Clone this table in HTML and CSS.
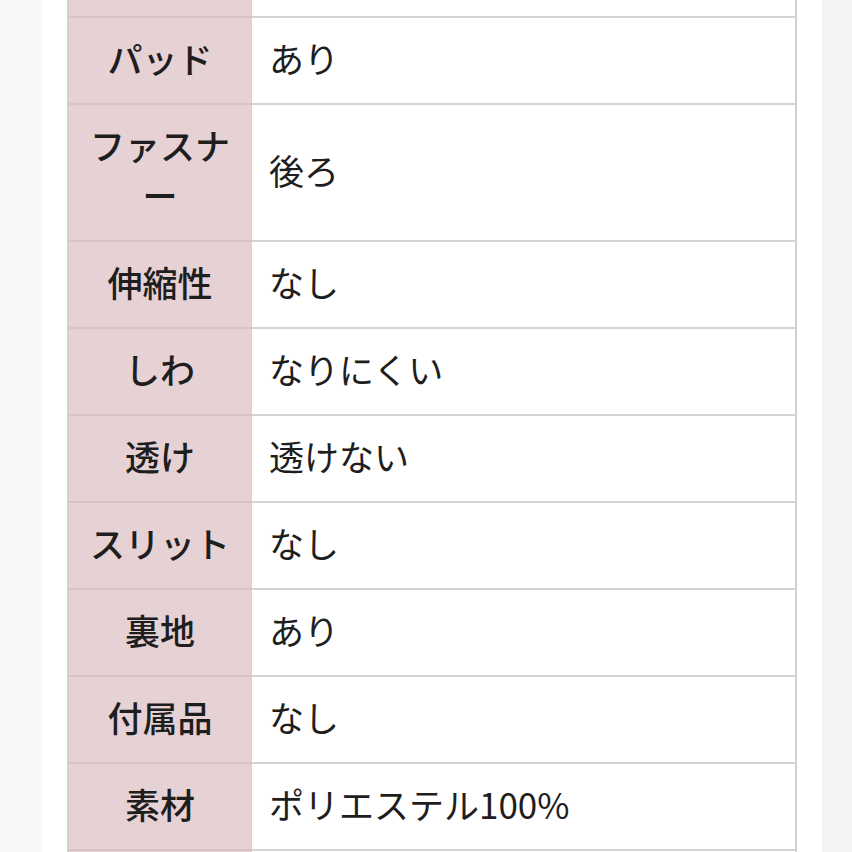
FILE: index.html
```html
<!DOCTYPE html>
<html lang="ja">
<head>
<meta charset="utf-8">
<link rel="stylesheet" href="styles.css">
</head>
<body>
<div class="page">
  <div class="card">
    <div class="spec">
      <div class="label top"></div><div class="value top"></div>
      <div class="label">パッド</div><div class="value">あり</div>
      <div class="label">ファスナー</div><div class="value">後ろ</div>
      <div class="label">伸縮性</div><div class="value">なし</div>
      <div class="label">しわ</div><div class="value">なりにくい</div>
      <div class="label">透け</div><div class="value">透けない</div>
      <div class="label">スリット</div><div class="value">なし</div>
      <div class="label">裏地</div><div class="value">あり</div>
      <div class="label">付属品</div><div class="value">なし</div>
      <div class="label">素材</div><div class="value">ポリエステル100%</div>
      <div class="label">&nbsp;</div><div class="value">&nbsp;</div>
    </div>
  </div>
</div>
</body>
</html>
```

FILE: styles.css
```css
html, body {
  margin: 0;
  padding: 0;
  height: 852px;
  overflow: hidden;
  background: #f4f4f4;
  font-family: "Noto Sans CJK JP", "Noto Sans", sans-serif;
  color: #1e1e1e;
}
.page {
  background: linear-gradient(to right, #f8f8f8 0, #f8f8f8 42px, #f3f3f3 42px);
  height: 852px;
}
.card {
  margin-left: 42px;
  width: 780px;
  height: 852px;
  background: #ffffff;
  box-sizing: border-box;
  padding-left: 25px;
}
.spec {
  width: 730px;
  box-sizing: border-box;
  border-left: 2px solid #d0d0d0;
  border-right: 2px solid #d0d0d0;
  display: grid;
  grid-template-columns: 183px 1fr;
}
.label, .value {
  font-size: 35px;
  line-height: 50px;
  padding: 15px 0 20px;
  border-bottom: 2px solid #d4d4d4;
}
.label {
  background: #e6d1d5;
  border-bottom-color: #d8c2c6;
  border-right: 1px solid #d6d0d0;
  text-align: center;
  font-weight: 500;
  padding-left: 16px;
  padding-right: 16px;
}
.value {
  padding-left: 17px;
  font-weight: 400;
  display: flex;
  align-items: center;
}
.top {
  height: 16px;
  padding: 0;
}
```
